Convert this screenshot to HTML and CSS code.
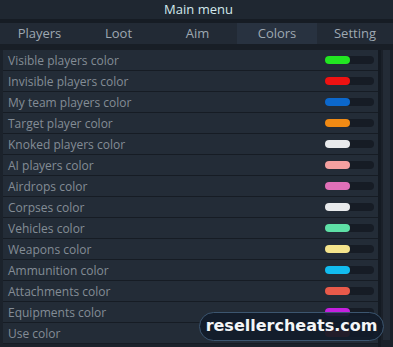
FILE: index.html
```html
<!DOCTYPE html>
<html>
<head>
<meta charset="utf-8">
<link rel="stylesheet" href="styles.css">
</head>
<body>
<div class="menu">
  <div class="title">Main menu</div>
  <div class="tabs">
    <div class="tab">Players</div>
    <div class="tab">Loot</div>
    <div class="tab">Aim</div>
    <div class="tab active">Colors</div>
    <div class="tab">Setting</div>
  </div>
  <div class="content">
    <div class="list">
      <div class="row"><span class="label">Visible players color</span><span class="track"><span class="swatch" style="background:#22e622"></span></span></div>
      <div class="row"><span class="label">Invisible players color</span><span class="track"><span class="swatch" style="background:#ee1212"></span></span></div>
      <div class="row"><span class="label">My team players color</span><span class="track"><span class="swatch" style="background:#0c68cc"></span></span></div>
      <div class="row"><span class="label">Target player color</span><span class="track"><span class="swatch" style="background:#f08a14"></span></span></div>
      <div class="row"><span class="label">Knoked players color</span><span class="track"><span class="swatch" style="background:#e8eaec"></span></span></div>
      <div class="row"><span class="label">AI players color</span><span class="track"><span class="swatch" style="background:#f4a0a0"></span></span></div>
      <div class="row"><span class="label">Airdrops color</span><span class="track"><span class="swatch" style="background:#e070b8"></span></span></div>
      <div class="row"><span class="label">Corpses color</span><span class="track"><span class="swatch" style="background:#e8eaec"></span></span></div>
      <div class="row"><span class="label">Vehicles color</span><span class="track"><span class="swatch" style="background:#5ee0a6"></span></span></div>
      <div class="row"><span class="label">Weapons color</span><span class="track"><span class="swatch" style="background:#f4e48c"></span></span></div>
      <div class="row"><span class="label">Ammunition color</span><span class="track"><span class="swatch" style="background:#12bcf0"></span></span></div>
      <div class="row"><span class="label">Attachments color</span><span class="track"><span class="swatch" style="background:#e85a4a"></span></span></div>
      <div class="row"><span class="label">Equipments color</span><span class="track"><span class="swatch" style="background:#c420e0"></span></span></div>
      <div class="row"><span class="label">Use color</span><span class="track"><span class="swatch" style="background:#c03030"></span></span></div>
    </div>
    <div class="scroll"><div class="thumb"></div></div>
  </div>
</div>
<div class="watermark">resellercheats.com</div>
</body>
</html>
```
FILE: styles.css
```css
html, body {
  margin: 0;
  padding: 0;
}
body {
  width: 393px;
  height: 347px;
  overflow: hidden;
  background: #1b222b;
  font-family: "Open Sans", "DejaVu Sans", sans-serif;
  position: relative;
}
.menu {
  display: flex;
  flex-direction: column;
}
.title {
  height: 19px;
  line-height: 19px;
  text-align: center;
  font-size: 13px;
  color: #d2e8ec;
  background: #1f2731;
  padding-left: 4px;
  border-bottom: 4px solid #161c24;
}
.tabs {
  display: grid;
  grid-template-columns: 79px 79px 79px 80px 76px;
  height: 21px;
  background: #222a35;
  border-bottom: 6px solid #181e26;
}
.tab {
  line-height: 21px;
  text-align: center;
  font-size: 13px;
  color: #9ea8b2;
}
.active {
  background: #283240;
}
.content {
  display: flex;
  height: 300px;
}
.list {
  width: 375px;
  padding-left: 3px;
  display: flex;
  flex-direction: column;
}
.row {
  height: 20px;
  border-bottom: 1px solid #161c24;
  background: #232c37;
  display: flex;
  align-items: center;
  justify-content: space-between;
}
.label {
  padding-left: 5px;
  font-size: 12px;
  color: #838c96;
}
.track {
  width: 49px;
  height: 8px;
  border-radius: 4px;
  background: #161c25;
  margin-right: 4px;
  display: flex;
}
.swatch {
  width: 25px;
  height: 8px;
  border-radius: 4px;
}
.scroll {
  width: 15px;
  border-left: 3px solid #141a22;
  background: #1a2029;
  box-sizing: border-box;
  padding: 0 3px 0 2px;
}
.thumb {
  height: 290px;
  background: #232b36;
}
.watermark {
  position: absolute;
  left: 199px;
  top: 312px;
  width: 185px;
  height: 29px;
  box-sizing: border-box;
  border: 1.5px solid #3c5670;
  border-radius: 15px;
  background: rgba(18, 28, 42, 0.9);
  color: #f4f6f8;
  font-family: "DejaVu Sans", sans-serif;
  font-weight: bold;
  font-size: 16px;
  line-height: 26px;
  text-align: center;
}
```
